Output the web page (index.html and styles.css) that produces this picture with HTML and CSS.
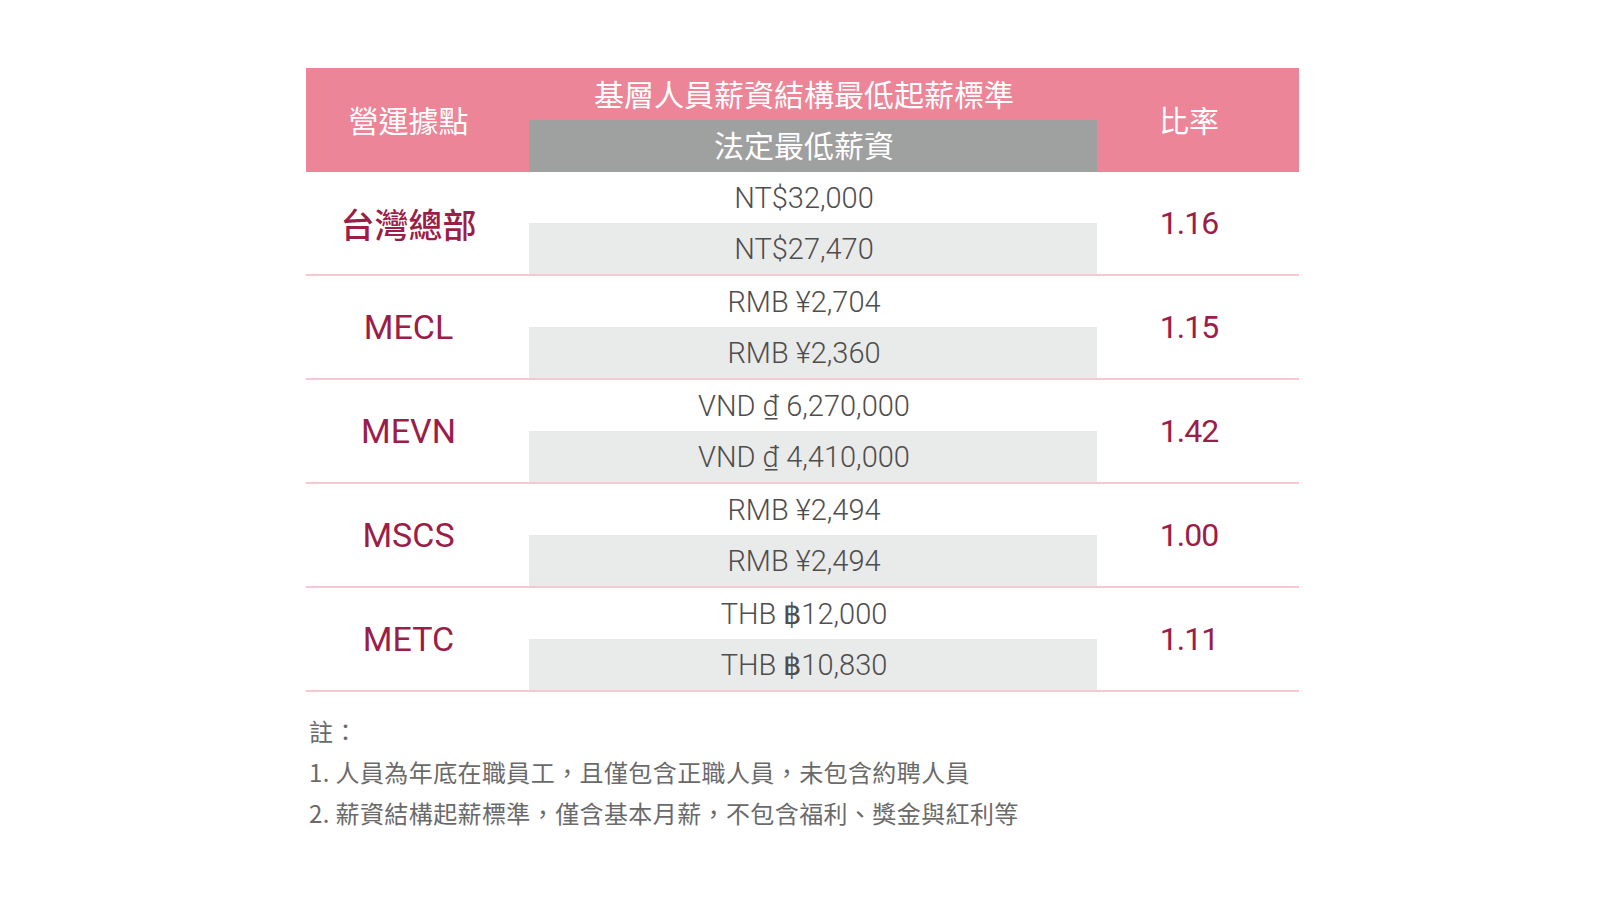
FILE: index.html
```html
<!DOCTYPE html>
<html lang="zh-Hant">
<head>
<meta charset="utf-8">
<title>基層人員薪資結構最低起薪標準</title>
<link rel="stylesheet" href="styles.css">
</head>
<body>
<main class="page">
  <section class="wage-table">
    <div class="head">
      <div class="head-cell head-site">營運據點</div>
      <div class="head-mid">
        <div class="head-title">基層人員薪資結構最低起薪標準</div>
        <div class="head-sub">法定最低薪資</div>
      </div>
      <div class="head-cell head-ratio">比率</div>
    </div>

    <div class="row">
      <div class="site cjk">台灣總部</div>
      <div class="vals">
        <div class="val">NT$32,000</div>
        <div class="val legal">NT$27,470</div>
      </div>
      <div class="ratio">1.16</div>
    </div>

    <div class="row">
      <div class="site">MECL</div>
      <div class="vals">
        <div class="val">RMB ¥2,704</div>
        <div class="val legal">RMB ¥2,360</div>
      </div>
      <div class="ratio">1.15</div>
    </div>

    <div class="row">
      <div class="site">MEVN</div>
      <div class="vals">
        <div class="val">VND ₫ 6,270,000</div>
        <div class="val legal">VND ₫ 4,410,000</div>
      </div>
      <div class="ratio">1.42</div>
    </div>

    <div class="row">
      <div class="site">MSCS</div>
      <div class="vals">
        <div class="val">RMB ¥2,494</div>
        <div class="val legal">RMB ¥2,494</div>
      </div>
      <div class="ratio">1.00</div>
    </div>

    <div class="row">
      <div class="site">METC</div>
      <div class="vals">
        <div class="val">THB ฿12,000</div>
        <div class="val legal">THB ฿10,830</div>
      </div>
      <div class="ratio">1.11</div>
    </div>
  </section>

  <section class="notes">
    <p>註：</p>
    <p>1. 人員為年底在職員工，且僅包含正職人員，未包含約聘人員</p>
    <p>2. 薪資結構起薪標準，僅含基本月薪，不包含福利、獎金與紅利等</p>
  </section>
</main>
</body>
</html>
```

FILE: styles.css
```css
html, body {
  margin: 0;
  padding: 0;
  background: #ffffff;
}

body {
  font-family: Roboto, "Noto Sans CJK TC", sans-serif;
  color: #595757;
}

.page {
  padding: 68px 0 0 306px;
}

.wage-table {
  width: 993px;
}

.head,
.row {
  display: grid;
  grid-template-columns: 223px 568px 202px;
}

.head {
  background: #ec8597;
  height: 104px;
  color: #ffffff;
  font-family: "Noto Sans CJK TC", sans-serif;
  font-weight: 400;
  font-size: 30px;
}

.head-cell {
  display: flex;
  align-items: center;
  justify-content: center;
  padding-bottom: 2px;
  padding-right: 18px;
}

.head-mid {
  display: grid;
  grid-template-rows: 52px 52px;
}

.head-title {
  display: flex;
  align-items: center;
  justify-content: center;
  font-size: 30px;
  padding-right: 18px;
  padding-bottom: 2px;
}

.head-sub {
  display: flex;
  align-items: center;
  justify-content: center;
  background: #9fa0a0;
  font-size: 30px;
  padding-right: 18px;
  padding-bottom: 4px;
}

.row {
  border-bottom: 2px solid #f8c8d2;
  height: 102px;
}

.site,
.ratio {
  display: flex;
  align-items: center;
  justify-content: center;
  padding-right: 18px;
  color: #9b1d48;
  font-family: Roboto, "Noto Sans CJK TC", sans-serif;
  font-weight: 400;
  font-size: 34px;
}

.ratio {
  font-size: 32px;
  letter-spacing: -1px;
}

.site.cjk {
  font-family: "Noto Sans CJK TC", sans-serif;
  font-weight: 500;
  font-size: 34px;
}

.vals {
  display: grid;
  grid-template-rows: 51px 51px;
}

.val {
  display: flex;
  align-items: center;
  justify-content: center;
  padding-right: 18px;
  font-size: 29px;
  font-weight: 300;
  color: #4f4d4d;
}

.val.legal {
  background: #e9eaea;
}

.notes {
  margin-top: 18px;
  padding-left: 3px;
  font-family: "Noto Sans CJK TC", sans-serif;
  font-size: 24px;
  letter-spacing: 0.4px;
  color: #6a6a6a;
}

.notes p {
  margin: 0;
  line-height: 41px;
}
```
